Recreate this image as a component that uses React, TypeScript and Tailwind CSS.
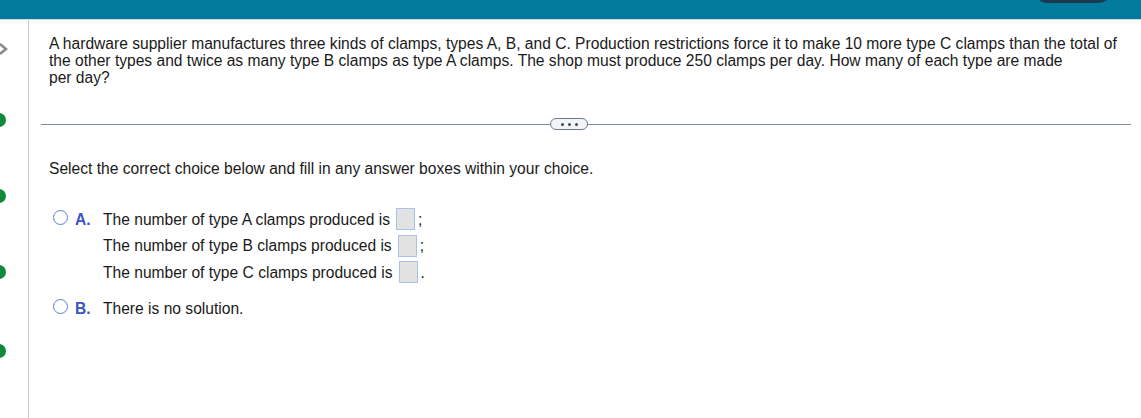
import React from "react";

const rows = ["A", "B", "C"];

function Radio() {
  return <span className="mt-[2px] inline-block h-[15px] w-[15px] shrink-0 rounded-full border-[1.5px] border-[#5b7fd1] bg-white" />;
}

function AnswerBox() {
  return <span className="mx-[6px] inline-block h-[22px] w-[19px] border border-[#a9c2ea] bg-[#e2e2e2] align-middle" />;
}

export default function App() {
  return (
    <div className="flex h-[418px] w-[1141px] flex-col overflow-hidden bg-white text-[15.6px] text-[#1a1a1a]" style={{ fontFamily: "'Liberation Sans', Arial, sans-serif" }}>
      <div className="relative h-[19px] shrink-0 bg-[#017a9d]">
        <div className="absolute left-[1035px] top-[-10px] h-[13px] w-[76px] rounded-b-[12px] bg-[#1b3a50]" />
      </div>
      <div className="h-[1px] shrink-0 bg-[#d5d9de]" />
      <div className="flex flex-1">
        <div className="relative w-[29px] shrink-0 border-r border-[#c9cbd4]">
          <svg className="absolute left-0 top-[22px]" width="8" height="14" viewBox="0 0 8 14">
            <path d="M0 2 L6 7 L0 12" fill="none" stroke="#8a8a8a" strokeWidth="2.5" />
          </svg>
          <span className="absolute left-[-8px] top-[93px] h-[14px] w-[14px] rounded-full bg-[#0e8a3a]" />
          <span className="absolute left-[-8px] top-[169px] h-[14px] w-[14px] rounded-full bg-[#0e8a3a]" />
          <span className="absolute left-[-8px] top-[245px] h-[14px] w-[14px] rounded-full bg-[#0e8a3a]" />
          <span className="absolute left-[-8px] top-[324px] h-[14px] w-[14px] rounded-full bg-[#0e8a3a]" />
        </div>
        <div className="flex-1 pr-[10px] pl-[12px]">
          <p className="whitespace-nowrap pt-[15px] pl-[8px] leading-[17px]">
            A hardware supplier manufactures three kinds of clamps, types A, B, and C. Production restrictions force it to make 10 more type C clamps than the total of
            <br />
            the other types and twice as many type B clamps as type A clamps. The shop must produce 250 clamps per day. How many of each type are made
            <br />
            per day?
          </p>
          <div className="mt-[32px] flex items-center">
            <div className="h-[1px] w-[509px] bg-[#7f8ea3]" />
            <div className="flex h-[12px] w-[38px] items-center justify-center gap-[4px] rounded-full border border-[#6b7a8f] bg-[#f3f4f6]">
              <span className="h-[3px] w-[3px] rounded-full bg-[#3e4a5a]" />
              <span className="h-[3px] w-[3px] rounded-full bg-[#3e4a5a]" />
              <span className="h-[3px] w-[3px] rounded-full bg-[#3e4a5a]" />
            </div>
            <div className="h-[1px] flex-1 bg-[#7f8ea3]" />
          </div>
          <p className="mt-[30px] pl-[8px] leading-[17px]">Select the correct choice below and fill in any answer boxes within your choice.</p>
          <div className="mt-[31px] flex gap-[7px] pl-[12px]">
            <Radio />
            <span className="w-[21px] font-bold text-[#3a55c4]">A.</span>
            <div className="flex flex-col gap-[4px]">
              {rows.map((r, i) => (
                <div key={r} className="flex h-[22.5px] items-center">
                  <span>The number of type {r} clamps produced is</span>
                  <AnswerBox />
                  <span className="-ml-[3px]">{i < 2 ? ";" : "."}</span>
                </div>
              ))}
            </div>
          </div>
          <div className="mt-[13px] flex gap-[7px] pl-[12px]">
            <Radio />
            <span className="w-[21px] font-bold text-[#3a55c4]">B.</span>
            <span>There is no solution.</span>
          </div>
        </div>
      </div>
    </div>
  );
}
